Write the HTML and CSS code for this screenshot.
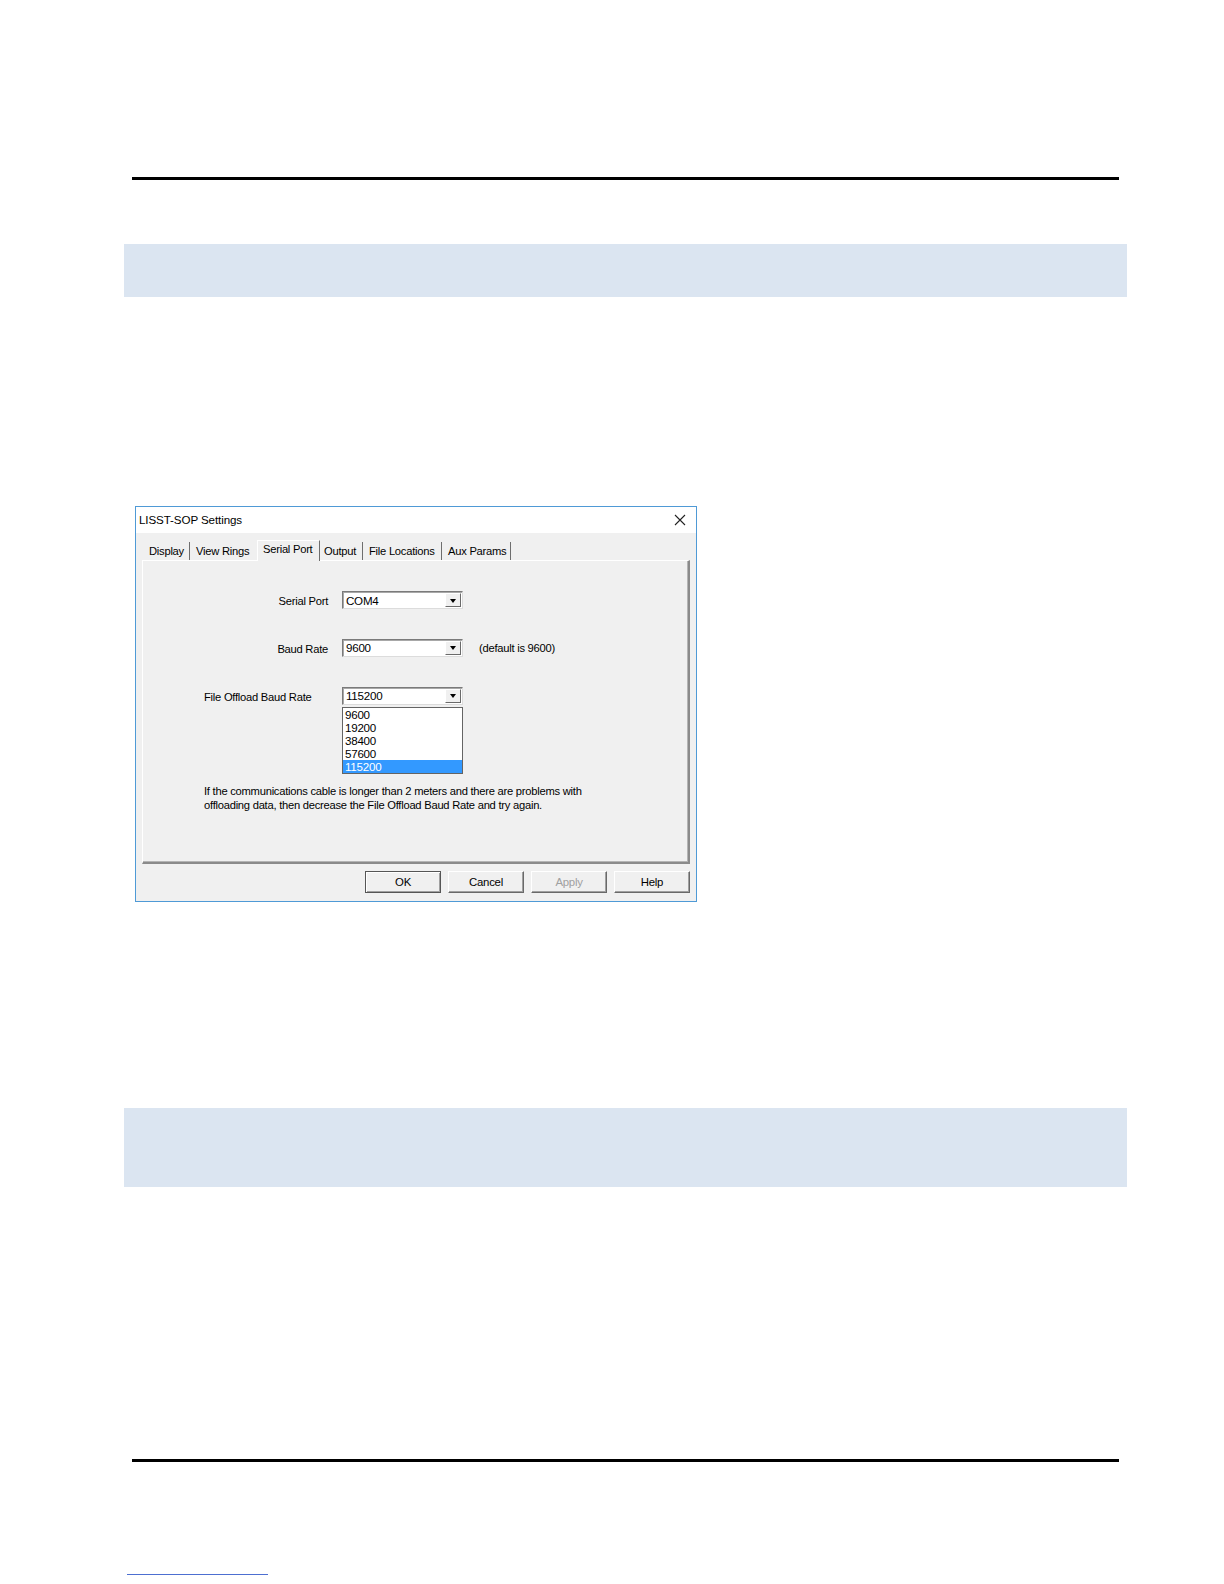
FILE: index.html
```html
<!DOCTYPE html>
<html>
<head>
<meta charset="utf-8">
<title>LISST-SOP Settings</title>
<link rel="stylesheet" href="styles.css">
</head>
<body>
<div class="page">
  <div class="rule rule-top"></div>
  <div class="band band-1"></div>

  <div class="dialog">
    <div class="titlebar">
      <span class="title">LISST-SOP Settings</span>
      <svg class="close" width="12" height="12" viewBox="0 0 12 12"><path d="M1 1 L11 11 M11 1 L1 11" stroke="#222" stroke-width="1.1" fill="none"/></svg>
    </div>
    <div class="client">
      <div class="tabs">
        <div class="tab tab-display">Display</div>
        <div class="tab tab-rings">View Rings</div>
        <div class="tab tab-serial active">Serial Port</div>
        <div class="tab tab-output">Output</div>
        <div class="tab tab-files">File Locations</div>
        <div class="tab tab-aux">Aux Params</div>
      </div>
      <div class="panel">
        <div class="form">
          <div class="row">
            <span class="lbl lbl-right">Serial Port</span>
            <div class="combo"><span class="combo-text">COM4</span><span class="drop"><span class="tri"></span></span></div>
          </div>
          <div class="row">
            <span class="lbl lbl-right">Baud Rate</span>
            <div class="combo"><span class="combo-text">9600</span><span class="drop"><span class="tri"></span></span></div>
            <span class="hint">(default is 9600)</span>
          </div>
          <div class="row row-3">
            <span class="lbl">File Offload Baud Rate</span>
            <div class="combo combo-open"><span class="combo-text">115200</span><span class="drop"><span class="tri"></span></span>
              <ul class="list">
                <li>9600</li>
                <li>19200</li>
                <li>38400</li>
                <li>57600</li>
                <li class="sel">115200</li>
              </ul>
            </div>
          </div>
        </div>
        <p class="note">If the communications cable is longer than 2 meters and there are problems with<br>offloading data, then decrease the File Offload Baud Rate and try again.</p>
      </div>
      <div class="buttons">
        <div class="btn btn-default">OK</div>
        <div class="btn">Cancel</div>
        <div class="btn btn-disabled">Apply</div>
        <div class="btn">Help</div>
      </div>
    </div>
  </div>

  <div class="band band-2"></div>
  <div class="rule rule-bottom"></div>
  <div class="link-line"></div>
</div>
</body>
</html>
```

FILE: styles.css
```css
html, body {
  margin: 0;
  padding: 0;
  background: #ffffff;
}

.page {
  width: 1224px;
  height: 1584px;
  overflow: hidden;
  padding-top: 177px;
  box-sizing: border-box;
}

.rule {
  height: 3px;
  width: 987px;
  margin-left: 132px;
  background: #000000;
}

.band {
  background: #dbe5f1;
  width: 1003px;
  margin-left: 124px;
}

.band-1 {
  margin-top: 64px;
  height: 53px;
}

.band-2 {
  margin-top: 206px;
  height: 79px;
}

.rule-bottom {
  margin-top: 272px;
}

.link-line {
  margin-top: 112px;
  margin-left: 127px;
  width: 141px;
  height: 1px;
  background: #4d6fd1;
}

/* ---------- dialog ---------- */
.dialog {
  margin-top: 209px;
  margin-left: 135px;
  width: 562px;
  height: 396px;
  box-sizing: border-box;
  border: 1px solid #4f9ad6;
  font-family: "Liberation Sans", Arial, sans-serif;
  font-size: 11.2px;
  letter-spacing: -0.25px;
  color: #000;
  display: flex;
  flex-direction: column;
}

.titlebar {
  height: 26px;
  background: #ffffff;
  display: flex;
  align-items: center;
  justify-content: space-between;
  padding: 0 10px 0 3px;
  flex: none;
}

.title {
  font-size: 11.6px;
  letter-spacing: -0.1px;
  color: #000;
  padding-bottom: 1px;
}

.close {
  display: block;
  margin-bottom: 1px;
}

.client {
  flex: 1;
  background: #f0f0f0;
  padding: 9px 6px 8px 6px;
  display: flex;
  flex-direction: column;
}

/* tabs */
.tabs {
  display: flex;
  height: 18px;
  align-items: flex-end;
  flex: none;
  position: relative;
  z-index: 1;
}

.tab {
  height: 18px;
  box-sizing: border-box;
  padding-left: 7px;
  line-height: 19px;
  white-space: nowrap;
  border-right: 1px solid #6e6e6e;
}

.tab-display { width: 48px; }
.tab-rings { width: 67px; border-right: none; padding-left: 6px; }
.tab-serial { width: 63px; }
.tab-output { width: 43px; padding-left: 4px; }
.tab-files { width: 79px; padding-left: 6px; }
.tab-aux { width: 69px; padding-left: 6px; }

.tab.active {
  line-height: 17px;
  border-left: 1px solid #ffffff;
  border-top: 1px solid #ffffff;
  padding-left: 5px;
  background: #f0f0f0;
  margin-bottom: -1px;
  height: 21px;
}

.panel {
  height: 304px;
  box-sizing: border-box;
  border-top: 1px solid #ffffff;
  border-left: 1px solid #ffffff;
  border-right: 2px solid #8a8a8a;
  border-bottom: 2px solid #8a8a8a;
  box-shadow: inset -1px -1px 0 #b4b4b4;
  padding: 30px 0 0 61px;
  flex: none;
}

.form {
  display: flex;
  flex-direction: column;
  gap: 29.5px;
}

.row {
  display: flex;
  align-items: center;
  height: 18px;
}

.row-3 {
  margin-top: 0.5px;
}

.lbl {
  width: 138px;
  flex: none;
  box-sizing: border-box;
  padding-top: 2px;
}

.lbl-right {
  text-align: right;
  padding-right: 14px;
}

.combo {
  position: relative;
  width: 121px;
  height: 18px;
  box-sizing: border-box;
  background: #ffffff;
  border: 1px solid;
  border-color: #7a7a7a #dcdcdc #dcdcdc #7a7a7a;
  box-shadow: inset 1px 1px 0 #a8a8a8;
  display: flex;
  align-items: center;
  justify-content: space-between;
  flex: none;
}

.combo-text {
  padding-left: 3px;
  font-size: 11.6px;
}

.drop {
  width: 16px;
  height: 14px;
  box-sizing: border-box;
  margin-right: 1px;
  background: #f0f0f0;
  border-top: 1px solid #ffffff;
  border-left: 1px solid #ffffff;
  border-right: 1px solid #6a6a6a;
  border-bottom: 1px solid #6a6a6a;
  display: flex;
  align-items: center;
  justify-content: center;
}

.tri {
  width: 0;
  height: 0;
  border-left: 3.5px solid transparent;
  border-right: 3.5px solid transparent;
  border-top: 4px solid #000;
  margin-top: 1px;
}

.hint {
  margin-left: 16px;
  padding-top: 1px;
}

.list {
  position: absolute;
  left: -1px;
  top: 19px;
  width: 121px;
  box-sizing: border-box;
  margin: 0;
  padding: 0;
  list-style: none;
  background: #ffffff;
  border: 1px solid #646464;
  z-index: 2;
}

.list li {
  height: 13px;
  line-height: 13px;
  padding-left: 2px;
  font-size: 11.6px;
}

.list li.sel {
  background: #3399ff;
  color: #ffffff;
}

.note {
  margin: 79px 0 0 0;
  line-height: 14px;
  letter-spacing: -0.25px;
}

/* buttons */
.buttons {
  margin-top: 7px;
  display: flex;
  justify-content: flex-end;
  gap: 7px;
  flex: none;
}

.btn {
  width: 76px;
  height: 22px;
  box-sizing: border-box;
  border-top: 1px solid #ffffff;
  border-left: 1px solid #ffffff;
  border-right: 1px solid #696969;
  border-bottom: 1px solid #696969;
  box-shadow: inset -1px -1px 0 #a0a0a0;
  background: #f0f0f0;
  text-align: center;
  line-height: 20px;
  font-size: 11.4px;
}

.btn-default {
  border: 1px solid #555555;
  box-shadow: inset 1px 1px 0 #ffffff, inset -1px -1px 0 #a0a0a0;
}

.btn-disabled {
  color: #a0a0a0;
}
```
